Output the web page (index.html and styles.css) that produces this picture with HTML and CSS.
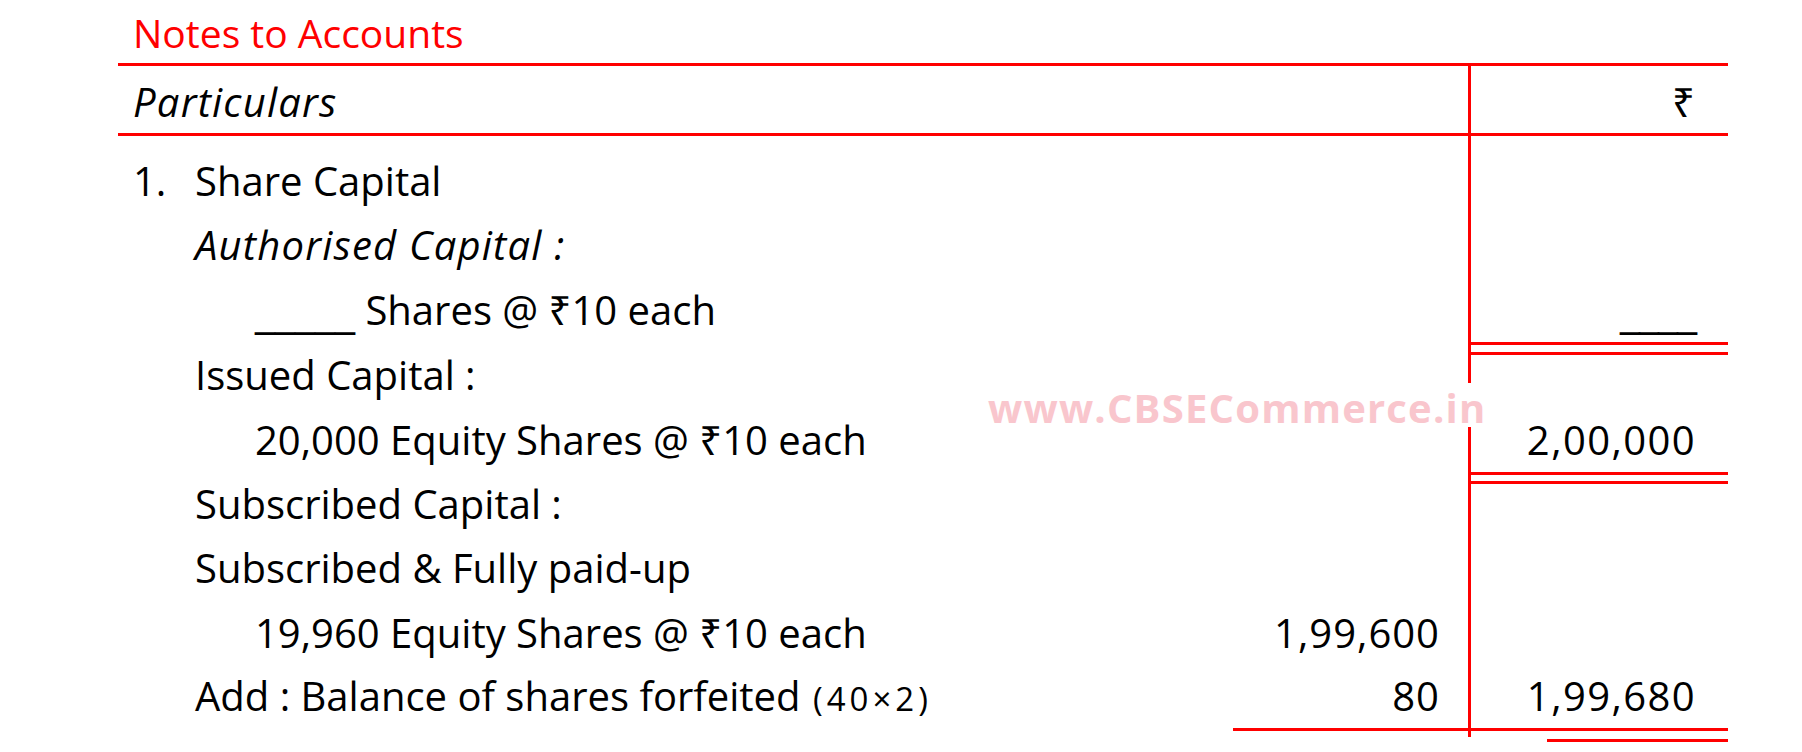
FILE: index.html
```html
<!DOCTYPE html>
<html lang="en">
<head>
<meta charset="utf-8">
<title>Notes to Accounts</title>
<link rel="stylesheet" href="styles.css">
</head>
<body>
<div class="sheet">
  <h1 class="title">Notes to Accounts</h1>
  <div class="row head">
    <div class="cell part"><em>Particulars</em></div>
    <div class="cell mid"></div>
    <div class="cell amt">₹</div>
  </div>
  <div class="row first">
    <div class="cell part"><span class="num">1.</span>Share Capital</div>
    <div class="cell mid"></div>
    <div class="cell amt"></div>
  </div>
  <div class="row">
    <div class="cell part l1"><em>Authorised Capital :</em></div>
    <div class="cell mid"></div>
    <div class="cell amt"></div>
  </div>
  <div class="row">
    <div class="cell part l2"><span class="blank">_____</span> Shares @ ₹10 each</div>
    <div class="cell mid"></div>
    <div class="cell amt dbl"><span class="blank blank-r">____</span></div>
  </div>
  <div class="row">
    <div class="cell part l1">Issued Capital :</div>
    <div class="cell mid"></div>
    <div class="cell amt"></div>
  </div>
  <div class="row">
    <div class="cell part l2">20,000 Equity Shares @ ₹10 each</div>
    <div class="cell mid"></div>
    <div class="cell amt dbl dbl-b">2,00,000</div>
  </div>
  <div class="row">
    <div class="cell part l1">Subscribed Capital :</div>
    <div class="cell mid"></div>
    <div class="cell amt"></div>
  </div>
  <div class="row">
    <div class="cell part l1">Subscribed &amp; Fully paid-up</div>
    <div class="cell mid"></div>
    <div class="cell amt"></div>
  </div>
  <div class="row">
    <div class="cell part l2">19,960 Equity Shares @ ₹10 each</div>
    <div class="cell mid">1,99,600</div>
    <div class="cell amt"></div>
  </div>
  <div class="row last">
    <div class="cell part l1">Add : Balance of shares forfeited <small class="calc">(40×2)</small></div>
    <div class="cell mid sum">80</div>
    <div class="cell amt sum">1,99,680</div>
  </div>
  <div class="row foot">
    <div class="cell"></div>
    <div class="cell"></div>
    <div class="cell tail">
      <div class="tail-v"></div>
      <div class="tail-rule"></div>
    </div>
  </div>
  <div class="watermark">www.CBSECommerce.in</div>
</div>
</body>
</html>
```

FILE: styles.css
```css
*,
*::before,
*::after {
  box-sizing: border-box;
}

body {
  margin: 0;
  background: #fff;
  color: #000;
  font-family: "Open Sans", "Noto Sans", "DejaVu Sans", sans-serif;
}

.sheet {
  position: relative;
  margin-left: 118px;
  width: 1610px;
}

.title {
  margin: 0;
  height: 63px;
  padding: 2px 0 0 15px;
  font-size: 39px;
  line-height: 61px;
  font-weight: 400;
  color: #f00;
}

.row {
  display: grid;
  grid-template-columns: 1115px 235px 260px;
  font-size: 40px;
  line-height: 64.4px;
}

.head {
  border-top: 3px solid #f00;
  border-bottom: 3px solid #f00;
}

.head .cell {
  padding-top: 4px;
  line-height: 63px;
}

.first .cell {
  padding-top: 13px;
}

.last {
  line-height: 62.9px;
}

.cell {
  white-space: nowrap;
}

.cell em {
  letter-spacing: 1.2px;
}

.part {
  padding-left: 15px;
}

.l1 {
  padding-left: 77px;
}

.l2 {
  padding-left: 137px;
}

.num {
  display: inline-block;
  width: 62px;
}

.mid {
  text-align: right;
  padding-right: 28px;
  letter-spacing: 1px;
}

.amt {
  position: relative;
  text-align: right;
  padding-right: 32px;
  letter-spacing: 1.4px;
  border-left: 3px solid #f00;
}

.head .amt {
  padding-right: 33px;
  letter-spacing: 0;
}

.dbl::after {
  content: "";
  position: absolute;
  left: -3px;
  right: 0;
  top: calc(100% - 1px);
  height: 13px;
  border-top: 3px solid #f00;
  border-bottom: 3px solid #f00;
}

.dbl-b::after {
  top: 100%;
  height: 12px;
}

.sum {
  border-bottom: 3px solid #f00;
}

.foot {
  line-height: 0;
}

.tail-v {
  width: 3px;
  height: 6px;
  background: #f00;
}

.tail-rule {
  margin: 2px 0 0 79px;
  height: 3px;
  background: #f00;
}

.blank {
  font-family: "DejaVu Sans", sans-serif;
  letter-spacing: 0;
}

.blank-r {
  letter-spacing: -1px;
}

.calc {
  margin-left: 2px;
  font-size: 33px;
  letter-spacing: 4px;
}

.watermark {
  position: absolute;
  left: 866px;
  top: 383px;
  height: 44px;
  padding: 5px 4px 0;
  font-size: 40px;
  line-height: 39px;
  font-weight: 700;
  letter-spacing: 1.2px;
  color: #f9c6cd;
  background: #fff;
  white-space: nowrap;
}
```
